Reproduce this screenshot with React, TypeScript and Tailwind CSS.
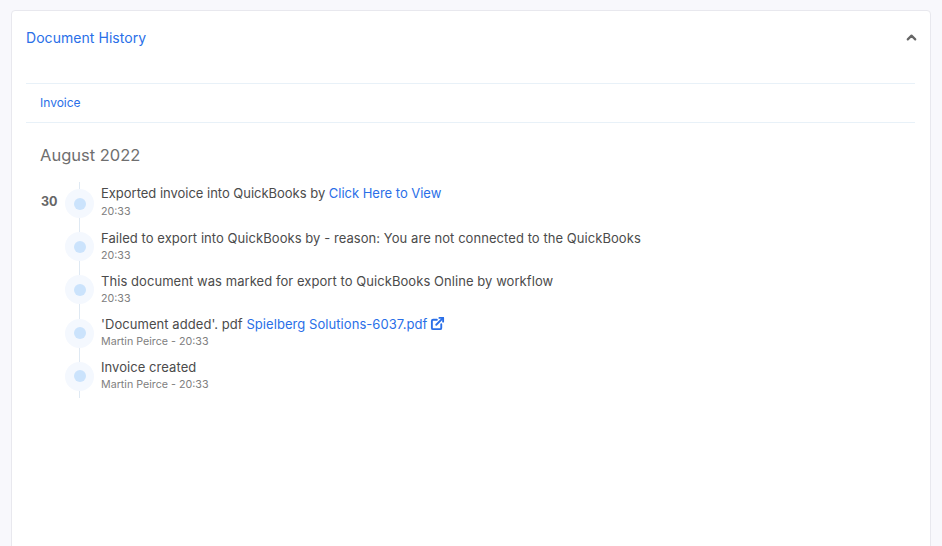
import { ChevronUp, ExternalLink } from 'lucide-react';
import type { ReactNode } from 'react';

type HistoryItem = { id: number; title: ReactNode; meta: string };

const items: HistoryItem[] = [
  {
    id: 1,
    title: (
      <>
        Exported invoice into QuickBooks by <a className="text-[#2a6fe8]">Click Here to View</a>
      </>
    ),
    meta: '20:33',
  },
  {
    id: 2,
    title: 'Failed to export into QuickBooks by - reason: You are not connected to the QuickBooks',
    meta: '20:33',
  },
  {
    id: 3,
    title: 'This document was marked for export to QuickBooks Online by workflow',
    meta: '20:33',
  },
  {
    id: 4,
    title: (
      <>
        'Document added'. pdf <a className="text-[#2a6fe8]">Spielberg Solutions-6037.pdf</a>
        <ExternalLink size={15} strokeWidth={3} className="ml-[3px] inline-block align-[-2px] text-[#2a6fe8]" />
      </>
    ),
    meta: 'Martin Peirce - 20:33',
  },
  { id: 5, title: 'Invoice created', meta: 'Martin Peirce - 20:33' },
];

function TimelineRow({ item, day }: { item: HistoryItem; day?: string }) {
  return (
    <div className="flex h-[43.2px] items-center">
      <div className="-mt-[3px] w-[25px] pl-px text-[12.5px] font-bold text-[#666]">{day}</div>
      <div className="flex h-[29px] w-[29px] items-center justify-center rounded-full bg-[#f4f8fe]">
        <div className="h-3 w-3 rounded-full bg-[#cbe3fc]" />
      </div>
      <div className={day ? 'ml-[7px] -mt-[4px]' : 'ml-[7px] -mt-px'}>
        <div
          className={
            day
              ? 'text-[13px] leading-[18px] tracking-[-0.02px] text-[#4b4b4b]'
              : 'text-[13px] leading-[18px] tracking-[0.06px] text-[#4b4b4b]'
          }
        >
          {item.title}
        </div>
        <div
          className={
            day
              ? 'mt-[2px] text-[10.7px] leading-[16px] text-[#808080]'
              : 'mt-px text-[10.7px] leading-[16px] text-[#808080]'
          }
        >
          {item.meta}
        </div>
      </div>
    </div>
  );
}

export default function App() {
  return (
    <div className="h-[546px] overflow-hidden bg-[#f8f8fc] px-[11px] pt-[10px] font-['Inter',sans-serif]">
      <div className="h-[560px] rounded border border-[#e8e8ee] bg-white px-[14px]">
        <div className="flex h-[72px] items-start justify-between pt-[18px]">
          <h2 className="text-[14px] leading-[18px] tracking-[0.05px] text-[#2a6fe8]">Document History</h2>
          <ChevronUp size={15} strokeWidth={3.5} className="mr-[-3px] mt-[1px] text-[#666]" />
        </div>
        <div className="w-[889px] border-y border-[#e8f1f8]">
          <div className="flex h-[38px] items-center pb-px pl-[14px] text-[12px] text-[#2a6fe8]">Invoice</div>
        </div>
        <div className="pl-[14px]">
          <h3 className="mt-[21px] text-[16.5px] leading-[22px] text-[#6f6f6f]">August 2022</h3>
          <div className="relative mt-[16px]">
            <div className="absolute bottom-0 left-[39px] top-0 w-px bg-[#dfe9f3]" />
            <div className="relative">
              {items.map((item, i) => (
                <TimelineRow key={item.id} item={item} day={i === 0 ? '30' : undefined} />
              ))}
            </div>
          </div>
        </div>
      </div>
    </div>
  );
}
